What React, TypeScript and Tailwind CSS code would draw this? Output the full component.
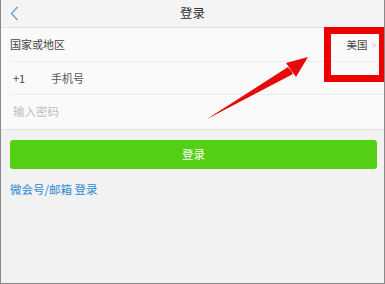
export default function App() {
  return (
    <div
      className="relative w-[385px] h-[284px] overflow-hidden bg-[#f2f2f2] border-x border-b border-[#8a8a8a]"
      style={{ fontFamily: '"Noto Sans CJK SC", "Noto Sans", sans-serif' }}
    >
      {/* 顶栏 */}
      <div className="relative flex items-center justify-center h-[28px] bg-[#f4f4f4] border-b border-[#e2e2e2]">
        <svg className="absolute left-[9px] top-[6px]" width="9" height="15" viewBox="0 0 9 15">
          <path d="M7.5 1 L1.5 7.5 L7.5 14" fill="none" stroke="#5d9fd6" strokeWidth="1.3" />
        </svg>
        <span className="text-[12.5px] text-[#333] leading-none">登录</span>
      </div>

      {/* 表单 */}
      <div className="bg-[#fafafa] border-b border-[#e2e2e2]">
        <div className="flex items-center justify-between h-[33px] pl-[9px] pr-[7px]">
          <span className="text-[11px] text-[#444]">国家或地区</span>
          <div className="flex items-center gap-[4px]">
            <span className="text-[10.5px] text-[#444]">美国</span>
            <span className="text-[10px] text-[#ccc]">&gt;</span>
          </div>
        </div>
        <div className="ml-[10px] border-t border-[#ececec]" />
        <div className="flex items-center h-[32px] pl-[12px]">
          <span className="w-[38px] text-[11px] text-[#444]">+1</span>
          <span className="text-[11px] text-[#555]">手机号</span>
        </div>
        <div className="ml-[10px] border-t border-[#ececec]" />
        <div className="flex items-center h-[34px] pl-[12px]">
          <span className="text-[11.5px] text-[#bdbdbd]">输入密码</span>
        </div>
      </div>

      {/* 登录按钮 */}
      <div className="pl-[9px] pr-[7px] pt-[10px]">
        <button className="w-full h-[29px] rounded-[3px] bg-[#53cf14] text-white text-[11.5px] leading-none">
          登录
        </button>
      </div>
      <div className="px-[9px] pt-[6px]">
        <span className="text-[11.5px] text-[#2a8ad6]">微会号/邮箱 登录</span>
      </div>

      {/* 红框标注 */}
      <div className="absolute left-[323px] top-[27px] w-[62px] h-[55px] border-[7px] border-[#ee0000]" />

      {/* 箭头 */}
      <svg className="absolute left-0 top-0" width="385" height="284" viewBox="0 0 385 284">
        <polygon points="206,119 289,69 291,72" fill="#e60b0b" />
        <polygon points="307,57 285,63 295,77" fill="#e60b0b" />
        <polygon points="206,119 287,67 292,74" fill="#e60b0b" />
      </svg>
    </div>
  )
}
